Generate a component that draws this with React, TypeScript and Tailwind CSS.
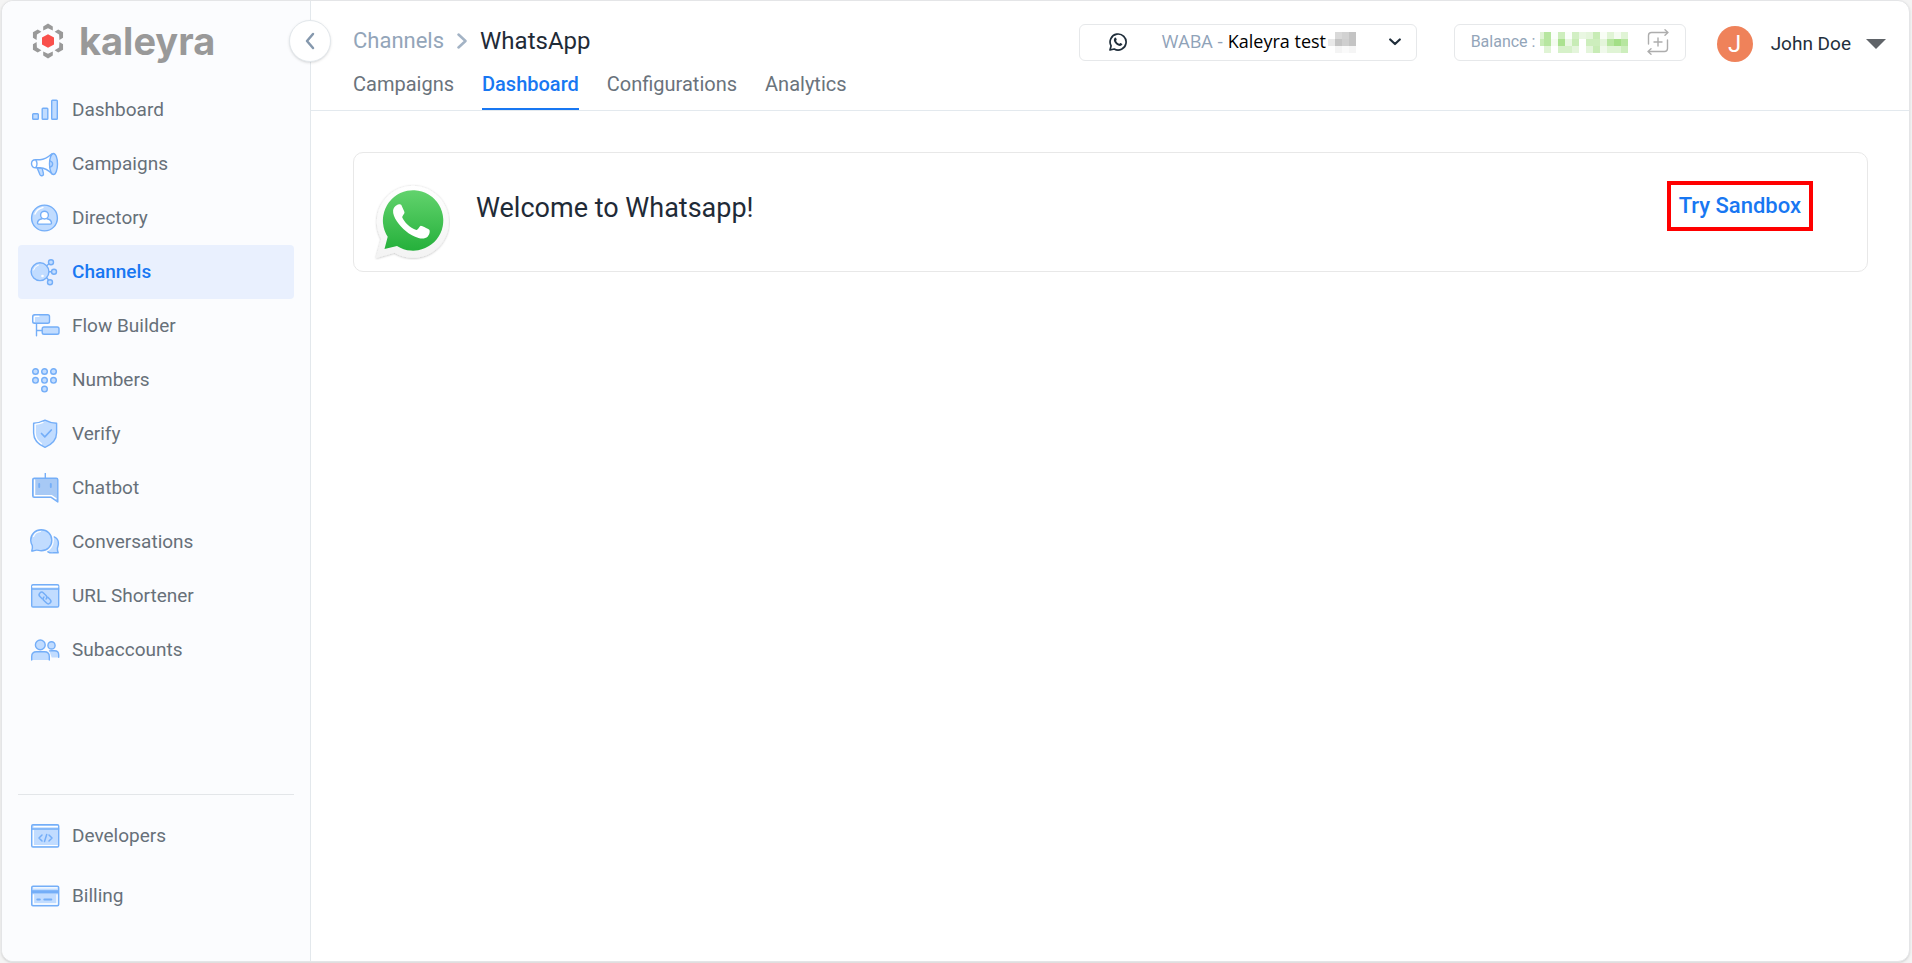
import React from "react";

const LINE = "#74aef8";
const FILL = "#c1dcff";

const Icon = ({ children }: { children: React.ReactNode }) => (
	<svg
		viewBox="0 0 30 30"
		className="size-[30px] shrink-0"
		fill={FILL}
		stroke={LINE}
		strokeWidth="1.4"
		strokeLinejoin="round"
		strokeLinecap="round"
		aria-hidden="true"
	>
		{children}
	</svg>
);

const icons: Record<string, React.ReactNode> = {
	dashboard: (
		<>
			<rect x="2.7" y="18.7" width="5.6" height="5.6" rx="0.8" />
			<rect x="12.2" y="13.2" width="5.6" height="11.1" rx="0.8" />
			<rect x="21.7" y="5.2" width="5.6" height="19.1" rx="0.8" />
		</>
	),
	campaigns: (
		<>
			<path d="M7 18.5l3 7.3c.5 1 1.5 1.2 2.5.8s1.2-1.2.9-2.2l-1.2-5z" />
			<path
				d="M5.500 10.800H10c4.500-.3 8-2.500 12-6v20c-3.500-3.600-7.500-5.600-12-6H5.500c-2.300 0-4-1.700-4-4s1.700-4 4-4z"
				fill="#fff"
			/>
			<path d="M6 11.500c1.300 1.500 1.300 5.200 0 6.700" fill="none" />
			<ellipse cx="23.5" cy="15" rx="4" ry="10.5" />
			<path d="M20 11.800c1.800.6 2.600 1.700 2.600 3.200s-.8 2.600-2.600 3.200" fill="none" />
		</>
	),
	directory: (
		<>
			<circle cx="14.5" cy="15" r="12.9" />
			<path d="M5 11a11 11 0 0 1 8-6.500" stroke="#fff" fill="none" />
			<path
				d="M12 15.800c-3 .7-4.500 2.200-4.500 4.300 0 .7.400 1 1 1h12c.6 0 1-.3 1-1 0-2.100-1.500-3.600-4.500-4.300"
				fill="#fff"
			/>
			<circle cx="14.5" cy="12.1" r="3.9" fill="#fff" />
		</>
	),
	channels: (
		<>
			<path d="M17 8.500l2-1.800M19 14.700h2.500M16.500 20.500l2 2.500" />
			<circle cx="10" cy="14.7" r="8.9" />
			<path d="M3.500 13a7 7 0 0 1 5-5" stroke="#fff" strokeWidth="1" fill="none" />
			<circle cx="12.5" cy="19" r="1.3" fill="#fff" stroke="none" />
			<circle cx="21" cy="5.2" r="2.5" />
			<circle cx="24" cy="14.7" r="2.5" />
			<circle cx="20" cy="25.2" r="2.5" />
		</>
	),
	flow: (
		<>
			<path d="M6.500 12.500v12.300M6.500 19.500h5.500" fill="none" />
			<rect x="2.7" y="3.7" width="16.8" height="8.6" rx="1.8" />
			<path d="M4.300 10.500v-4c0-.8.500-1.200 1.200-1.200H9" stroke="#fff" strokeWidth="1.2" fill="none" />
			<rect x="12.2" y="16" width="16.8" height="7.3" rx="1.8" />
		</>
	),
	numbers: (
		<>
			{[
				[5.5, 6.5],
				[14.5, 6.5],
				[23.5, 6.5],
				[5.5, 15.3],
				[14.5, 15.3],
				[23.5, 15.3],
				[14.5, 24.1],
			].map(([cx, cy]) => (
				<circle key={`${cx}-${cy}`} cx={cx} cy={cy} r="2.8" />
			))}
		</>
	),
	verify: (
		<>
			<path d="M15 1.200c3.500 2 7.500 2.900 11.600 3v9.500c0 6.500-4.300 11.500-11.600 14.600C7.700 25.200 3.600 20.200 3.600 13.700V4.200c4.100-.1 7.900-1 11.400-3z" />
			<path d="M13 3.400c-2.400 1.100-5 1.700-7.800 1.900v8.400c0 4.500 2.300 8.300 6.300 11" stroke="#fff" strokeWidth="1.3" fill="none" />
			<path d="M11.500 14.500l3.300 3.300 6.500-6.800" strokeWidth="1.7" fill="none" />
		</>
	),
	chatbot: (
		<>
			<path d="M15.300 0v5" />
			<path
				d="M4.300 5.200h21.900c1 0 1.600.6 1.600 1.600V29l-6.600-4.600H4.300c-1 0-1.600-.6-1.600-1.600v-16c0-1 .6-1.600 1.600-1.600z"
				fill="#a7c9f5"
			/>
			<path d="M4.600 7v15.600h16.800l4.500 3" stroke="#fff" strokeWidth="1.3" fill="none" />
			<path d="M9.200 11v3M20.800 11v3" strokeWidth="1.9" />
		</>
	),
	conversations: (
		<>
			<path d="M23.700 9.500c3 1.200 4.700 3.600 4.700 6.700 0 2.200-.8 3.800-1 5.300-.1 1.500.3 3 .8 4.300-1.600-.2-3-.1-4.600 0-2.500.2-5-.3-6.300-1.500 4.600-2 7.400-7 6.400-14.800z" stroke="none" />
			<path d="M24.300 9.900c2.700 1.200 4.100 3.500 4.100 6.300 0 2.200-.8 3.800-1 5.300-.1 1.500.3 3 .8 4.300-1.600-.2-3-.1-4.600 0-2.200.2-4.300-.1-5.700-1" fill="none" />
			<path d="M11.200 2.700c6 0 10.600 4.500 10.600 10.500S17.200 23.700 11.200 23.700c-2.200 0-3-.7-4.700-.6-1.700.1-3 1-4.800 1 .6-2 1.100-3.500.6-5.500C1.400 16.800.7 15.300.7 13.200c0-6 4.600-10.500 10.500-10.500z" />
			<path d="M3.500 9.500c1.200-3 3.800-4.800 7-5" stroke="#fff" strokeWidth="1.2" fill="none" />
		</>
	),
	url: (
		<>
			<rect x="1.7" y="3.7" width="27" height="22.3" rx="1.3" />
			<path d="M3 5.700h24.500" stroke="#fff" strokeWidth="1.8" />
			<path d="M1.700 8h27" />
			<g transform="rotate(45 15 17)" fill="none" strokeWidth="1.5">
				<path d="M13.500 19.500h-3.200a2.500 2.500 0 0 1 0-5h3.700a2.500 2.500 0 0 1 2.500 2.500" />
				<path d="M16.500 14.500h3.200a2.500 2.500 0 0 1 0 5h-3.700a2.500 2.500 0 0 1-2.500-2.500" />
			</g>
		</>
	),
	subaccounts: (
		<>
			<path d="M19.500 16.200c.7-.4 1.400-.5 2.300-.5h2.700c2.500 0 4.200 1.500 4.200 4v2.800h-7z" stroke="none" />
			<path d="M19.500 15.900c.8-.2 1.500-.2 2.300-.2h2.700c2.500 0 4.200 1.500 4.200 4v2.500" fill="none" />
			<path d="M1.700 25v-3.500c0-3 1.800-4.800 4.800-4.800h8c3 0 4.800 1.800 4.800 4.800V25" />
			<circle cx="10.3" cy="9.9" r="4.9" />
			<circle cx="21.5" cy="10.4" r="3.6" />
		</>
	),
	developers: (
		<>
			<rect x="1.7" y="3.7" width="27" height="22.3" rx="1.3" />
			<path d="M4 5.700h23.500M3.300 9.200v15.300h24" stroke="#fff" strokeWidth="1.2" fill="none" />
			<path d="M1.700 8h27" />
			<path d="M12 14l-3 3 3 3M19 14l3 3-3 3M16.700 13.500l-2.200 7" fill="none" strokeWidth="1.5" />
		</>
	),
	billing: (
		<>
			<rect x="1.7" y="5.2" width="27" height="19.5" rx="1.3" />
			<path d="M3.500 6.800h23.500M3.500 14v9h23.500V14" stroke="#fff" strokeWidth="1.3" fill="none" />
			<path d="M2 10.800h26.500" strokeWidth="3.2" strokeLinecap="butt" />
			<path d="M7.300 18.500h2.500M14.300 18.500h7" strokeWidth="2" />
		</>
	),
};

const mainLinks = [
	{ label: "Dashboard", icon: "dashboard" },
	{ label: "Campaigns", icon: "campaigns" },
	{ label: "Directory", icon: "directory" },
	{ label: "Channels", icon: "channels", active: true },
	{ label: "Flow Builder", icon: "flow" },
	{ label: "Numbers", icon: "numbers" },
	{ label: "Verify", icon: "verify" },
	{ label: "Chatbot", icon: "chatbot" },
	{ label: "Conversations", icon: "conversations" },
	{ label: "URL Shortener", icon: "url" },
	{ label: "Subaccounts", icon: "subaccounts" },
];

const footerLinks = [
	{ label: "Developers", icon: "developers" },
	{ label: "Billing", icon: "billing" },
];

const tabs = ["Campaigns", "Dashboard", "Configurations", "Analytics"];

// masked values, one colour per 7px cell
const accountMask = [
	["#ffffff", "#d9d9d9", "#d2d2d2", "#c4c4c4"],
	["#e9e9e9", "#c4c4c4", "#cfcfcf", "#c4c4c4"],
	["#ffffff", "#f4f4f4", "#fafafa", "#f5f5f5"],
];

const balanceMask = [
	["#e0f4d5", "#b7e6a0", "#fafefa", "#cdeebd", "#fafefa", "#d2efc4", "#e9f7e2", "#e4f5db", "#c8ecb6", "#f8fdf5", "#e0f4d5", "#f4fbf0", "#e0f4d5"],
	["#c8ecb6", "#b7e6a0", "#f4fbf0", "#abe290", "#e9f7e2", "#c8ecb6", "#ffffff", "#cdeebd", "#cdeebd", "#e4f5db", "#b7e6a0", "#a3df86", "#b7e6a0"],
	["#ffffff", "#e0f4d5", "#ffffff", "#d6f1c9", "#d6f1c9", "#e4f5db", "#ffffff", "#e4f5db", "#c8ecb6", "#f0f9eb", "#e0f4d5", "#e0f4d5", "#cdeebd"],
];

// crop cuts into the first column
const Mask = ({ rows, crop = 0 }: { rows: string[][]; crop?: number }) => {
	const width = rows[0].length * 7 - crop;
	return (
		<svg width={width} height="21" viewBox={`${crop} 0 ${width} 21`} shapeRendering="crispEdges" aria-hidden="true">
			{rows.map((row, y) =>
				row.map((color, x) => (
					<rect key={`${x}-${y}`} x={x * 7} y={y * 7} width="7" height="7" fill={color} />
				))
			)}
		</svg>
	);
};

const Logo = () => (
	<a href="#" className="flex items-center gap-[15px] pl-3.5" aria-label="kaleyra">
		<svg viewBox="0 0 32 36" className="w-8 h-9" fill="#999" aria-hidden="true">
			{[0, 60, 120, 180, 240, 300].map((deg) => (
				<path
					key={deg}
					transform={`rotate(${deg} 16 18)`}
					d="M11.200 3.400L16 .6l4.800 2.800v4.200L16 5.200l-4.800 2.400z"
				/>
			))}
			<path d="M16 11.200l6 3.400v6.800l-6 3.400-6-3.400v-6.800z" fill="#f9504c" />
		</svg>
		<span className="font-['Inter'] font-bold text-[38px] leading-10 text-[#999]">kaleyra</span>
	</a>
);

const NavItem = ({ label, icon, active }: { label: string; icon: string; active?: boolean }) => (
	<li>
		<a
			href="#"
			className={
				active
					? "flex items-center gap-3 h-[54px] pl-3 rounded bg-[#e9f0fe] text-[#1877f2] font-medium"
					: "flex items-center gap-3 h-[54px] pl-3 rounded text-[#677079]"
			}
		>
			<Icon>{icons[icon]}</Icon>
			{label}
		</a>
	</li>
);

const Sidebar = () => (
	<aside className="relative flex flex-col w-[309px] shrink-0 border-r border-[#e3e8ec] bg-[#fbfcfe] rounded-l-xl px-4 text-[19px]">
		<div className="pt-5 pb-[22px]">
			<Logo />
		</div>
		<button
			type="button"
			aria-label="Collapse menu"
			className="absolute -right-[21px] top-[19px] size-[42px] rounded-full border border-[#e3e8ec] bg-white shadow-sm flex items-center justify-center"
		>
			<svg viewBox="0 0 12 18" className="w-3 h-[18px]" fill="none" stroke="#8598ad" strokeWidth="2.5" strokeLinecap="round" strokeLinejoin="round">
				<path d="M9 2L3 9l6 7" />
			</svg>
		</button>
		<ul>
			{mainLinks.map((link) => (
				<NavItem key={link.label} {...link} />
			))}
		</ul>
		<ul className="mt-auto mb-[38px] pt-3.5 border-t border-[#e3e6e9] flex flex-col gap-1.5">
			{footerLinks.map((link) => (
				<NavItem key={link.label} {...link} />
			))}
		</ul>
	</aside>
);

const AccountSelect = () => (
	<div className="flex items-center w-[338px] h-[37px] pl-[29px] pr-[15px] border border-[#e6e8ea] rounded-md font-['Open_Sans'] text-lg">
		<svg viewBox="0 0 18 18" className="size-[18px] shrink-0 mr-[35px]" fill="none" stroke="#1f2d3a" strokeWidth="1.7" strokeLinejoin="round" aria-hidden="true">
			<path d="M1 17l1.100-4.100A8 8 0 1 1 5.200 16z" />
			<path
				d="M5.600 5c.5-.6 1.200-.5 1.500.1l.6 1.400c.1.400-.4.900-.7 1.200.7 1.500 1.800 2.500 3.300 3.200.4-.4.800-1 1.200-.8l1.400.7c.6.300.5.900.1 1.300-1 1.100-2.600 1-4.300.1-1.700-.9-2.900-2.200-3.500-3.700-.5-1.300-.4-2.600.4-3.500z"
				fill="#1f2d3a"
				stroke="none"
			/>
		</svg>
		<label htmlFor="waba" className="pb-0.5 text-[#8fa2b8] whitespace-pre">WABA - </label>
		<div className="relative flex-1 flex items-center">
			<select id="waba" className="appearance-none w-full pb-0.5 bg-transparent text-black">
				<option>Kaleyra test</option>
			</select>
			<span className="absolute right-[33px] pointer-events-none">
				<Mask rows={accountMask} />
			</span>
		</div>
		<svg viewBox="0 0 12 8" className="w-3 h-2 shrink-0" fill="none" stroke="#1f2d3a" strokeWidth="2.2" strokeLinecap="round" strokeLinejoin="round" aria-hidden="true">
			<path d="M1.200 1.500L6 6l4.800-4.500" />
		</svg>
	</div>
);

const Header = () => (
	<header className="flex justify-between h-[110px] pl-[42px] pr-[23px] border-b border-[#e3e9ee]">
		<div className="flex flex-col justify-between pt-6">
			<nav aria-label="Breadcrumb" className="flex items-center gap-[13px] leading-8">
				<a href="#" className="text-[22px] text-[#93a5b9]">Channels</a>
				<svg viewBox="0 0 10 16" className="w-2.5 h-4" fill="none" stroke="#a3b3c5" strokeWidth="2.5" strokeLinecap="round" strokeLinejoin="round" aria-hidden="true">
					<path d="M1.500 1.500L8.500 8l-7 6.500" />
				</svg>
				<span className="text-2xl leading-8 text-[#1f2b37]">WhatsApp</span>
			</nav>
			<nav className="flex gap-7 text-xl leading-7">
				{tabs.map((tab) => (
					<a
						key={tab}
						href="#"
						className={
							tab === "Dashboard"
								? "pb-2.5 border-b-2 border-[#1877f2] text-[#1877f2] font-medium"
								: "pb-2.5 border-b-2 border-transparent text-[#6a737c]"
						}
					>
						{tab}
					</a>
				))}
			</nav>
		</div>
		<div className="flex items-center h-[38px] mt-[22px]">
			<AccountSelect />
			<div className="flex items-center w-[232px] h-[37px] ml-[37px] px-4 border border-[#e6e8ea] rounded-md text-base text-[#93a5b9]">
				<span className="mr-[5px]">Balance :</span>
				<Mask rows={balanceMask} crop={3} />
				<button type="button" aria-label="Add balance" className="ml-auto">
					<svg viewBox="0 0 22 26" className="w-[22px] h-[26px]" fill="none" stroke="#adadad" strokeWidth="1.4" strokeLinecap="round" strokeLinejoin="round">
						<path d="M1.500 15V6.500c0-2 1-3 3-3H21M18 .8l3 2.700-3 2.700" />
						<path d="M20.500 11v8.500c0 2-1 3-3 3H1M4 19.800l-3 2.700 3 2.700" />
						<path d="M11 9v8M7 13h8" />
					</svg>
				</button>
			</div>
			<button type="button" className="flex items-center mt-1 ml-[31px] text-[19px] text-[#232f3c]">
				<span className="flex items-center justify-center size-9 mr-[18px] rounded-full bg-[#ef825a] text-white text-2xl">J</span>
				John Doe
				<svg viewBox="0 0 20 10" className="w-5 h-2.5 ml-[15px]" fill="#5f6368" aria-hidden="true">
					<path d="M0 0h20L10 10z" />
				</svg>
			</button>
		</div>
	</header>
);

const WhatsappLogo = () => (
	<svg viewBox="0 0 76 76" className="size-[76px] shrink-0" aria-hidden="true">
		<defs>
			<linearGradient id="wa" x1="0" y1="0" x2="0" y2="1">
				<stop offset="0" stopColor="#62d36d" />
				<stop offset="1" stopColor="#25b03b" />
			</linearGradient>
			<linearGradient id="rim" x1="0" y1="0" x2="0" y2="1">
				<stop offset="0" stopColor="#fff" />
				<stop offset="1" stopColor="#f3f3f3" />
			</linearGradient>
			<filter id="soft" x="-10%" y="-10%" width="120%" height="120%">
				<feDropShadow dx="0" dy="0.5" stdDeviation="1" floodColor="#000" floodOpacity="0.28" />
			</filter>
		</defs>
		<path
			d="M2 74l5.200-19A36 36 0 1 1 20.500 68.800z"
			fill="url(#rim)"
			filter="url(#soft)"
		/>
		<path d="M10.500 65l3.200-12.200A30.200 30.200 0 1 1 23 62z" fill="url(#wa)" />
		<path
			d="M23 21c1.200-.9 3.600-.9 4.600.4 1.200 2.600 2.300 5 2.900 6.800.3 1.600-2.500 3.700-2.300 5 1.800 4.500 7.500 10.500 14.200 12.800 1.600.3 3-3.900 4.500-4.200 1.500.3 6.300 2.700 8.100 3.800 1.400 1.200.6 5-1.200 6.800-2.500 2.400-6 2.500-9.300 1.500-9-2.500-17-9.500-21.500-16.400-2.500-4-4.300-7.500-3.900-11.300.3-2.200 1.700-4 3.900-5.200z"
			fill="#fff"
		/>
	</svg>
);

const App = () => {
	return (
		<div className="h-screen min-h-[900px] bg-[#f4f4f4] pl-px pr-0.5 pb-px font-['Roboto',sans-serif]">
			<div className="flex h-full bg-white border border-[#e4e5e7] rounded-xl shadow-sm">
				<Sidebar />
				<main className="flex-1">
					<Header />
					<div className="pl-[42px] pr-[41px] pt-[41px]">
						<section className="flex items-start h-[120px] pl-5 pr-[54px] border border-[#e8e8e8] rounded-[10px]">
							<div className="pt-[31px]">
								<WhatsappLogo />
							</div>
							<h1 className="ml-[26px] pt-[35px] text-[27px] leading-10 text-[#1f2b37]">Welcome to Whatsapp!</h1>
							<button
								type="button"
								className="ml-auto mt-7 h-[50px] px-2 pb-0.5 border-4 border-[#ff0000] text-[22px] font-medium text-[#1877f2]"
							>
								Try Sandbox
							</button>
						</section>
					</div>
				</main>
			</div>
		</div>
	);
};

export default App;
